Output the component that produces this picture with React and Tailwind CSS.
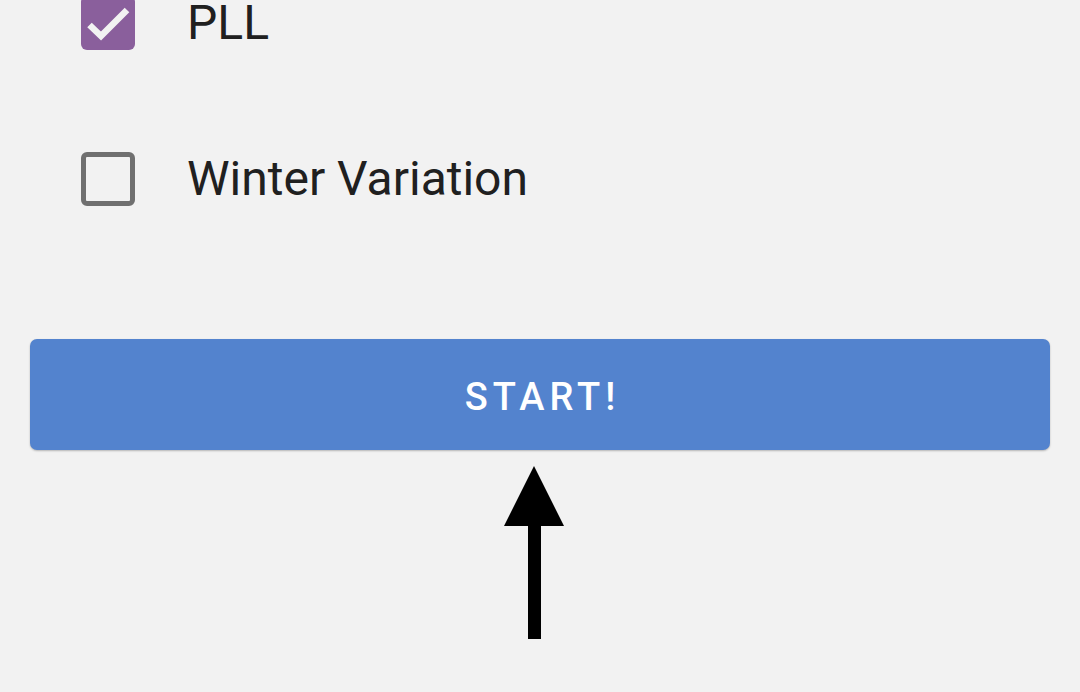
export default function App() {
  return (
    <div className="w-[1080px] h-[692px] bg-[#f2f2f2] overflow-hidden flex flex-col" style={{ fontFamily: 'Roboto, "Noto Sans", sans-serif' }}>
      <div className="flex items-center h-[54px] mt-[-4px] pl-[81px]">
        <div className="w-[54px] h-[54px] rounded-[6px] bg-[#8a5f9c]">
          <svg width="54" height="54" viewBox="0 0 54 54">
            <path d="M8.5 29 L20 40 L46 14" fill="none" stroke="#f2f2f2" strokeWidth="6.5" strokeLinecap="butt" strokeLinejoin="miter" />
          </svg>
        </div>
        <span className="ml-[52px] text-[48px] leading-none text-[#202020]">PLL</span>
      </div>
      <div className="flex items-center h-[54px] mt-[102px] pl-[81px]">
        <div className="w-[54px] h-[54px] rounded-[6px] border-[5px] border-[#707070]" />
        <span className="ml-[52px] text-[48px] leading-none text-[#202020]">Winter Variation</span>
      </div>
      <button className="mt-[133px] mx-[30px] h-[111px] pt-[6px] rounded-[7px] bg-[#5383ce] text-white text-[38px] font-medium tracking-[5px] pl-[5px] flex items-center justify-center shadow-[0_1px_2px_rgba(0,0,0,0.25)]">
        START!
      </button>
      <div className="mt-[16px] ml-[504px] w-[60px]">
        <svg width="60" height="173" viewBox="0 0 60 173">
          <polygon points="30,0 60,60 0,60" fill="#000" />
          <rect x="24" y="58" width="13" height="115" fill="#000" />
        </svg>
      </div>
    </div>
  );
}
